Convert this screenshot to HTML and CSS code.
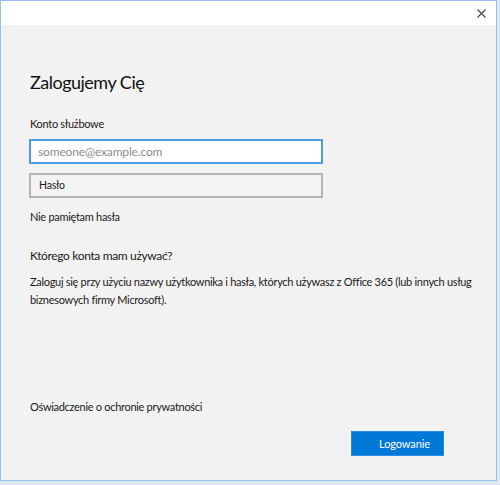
FILE: index.html
```html
<!DOCTYPE html>
<html lang="pl">
<head>
<meta charset="utf-8">
<title>Zaloguj</title>
<link rel="stylesheet" href="styles.css">
</head>
<body>
<div class="window">
  <div class="titlebar">
    <button class="close" aria-label="Zamknij">
      <svg width="9" height="9" viewBox="0 0 9 9"><path d="M0.5 0.5 L8.5 8.5 M8.5 0.5 L0.5 8.5" stroke="#444" stroke-width="1.1" fill="none"/></svg>
    </button>
  </div>
  <div class="content">
    <h1 class="heading">Zalogujemy Cię</h1>
    <div class="label">Konto służbowe</div>
    <input class="field field-email" type="text" placeholder="someone@example.com">
    <div class="field field-pass">Hasło</div>
    <a class="link forgot">Nie pamiętam hasła</a>
    <h2 class="subheading">Którego konta mam używać?</h2>
    <p class="desc">Zaloguj się przy użyciu nazwy użytkownika i hasła, których używasz z Office 365 (lub innych usług biznesowych firmy Microsoft).</p>
    <div class="spacer"></div>
    <a class="link privacy">Oświadczenie o ochronie prywatności</a>
    <div class="actions">
      <button class="signin">Logowanie</button>
    </div>
  </div>
</div>
</body>
</html>
```
FILE: styles.css
```css
html, body {
  margin: 0;
  padding: 0;
}
body {
  width: 500px;
  height: 485px;
  background: #dfe8f2;
  font-family: "Lato", "Liberation Sans", sans-serif;
  color: #1a1a1a;
  overflow: hidden;
}
.window {
  width: 495px;
  height: 479px;
  border: 1px solid #95c1ec;
  background: #f2f2f2;
  display: flex;
  flex-direction: column;
}
.titlebar {
  height: 24px;
  background: #ffffff;
  display: flex;
  justify-content: flex-end;
  align-items: center;
}
.close {
  width: 30px;
  height: 24px;
  border: 0;
  background: transparent;
  padding: 0;
  margin-right: 0;
  display: flex;
  align-items: center;
  justify-content: center;
}
.content {
  flex: 1;
  display: flex;
  flex-direction: column;
  padding-left: 28px;
  padding-right: 8px;
}
.heading {
  margin: 45px 0 0 1px;
  font-size: 18px;
  letter-spacing: -0.5px;
  line-height: 24px;
  font-weight: 400;
  color: #111;
}
.label {
  margin: 22px 0 0 1px;
  font-size: 11px;
  letter-spacing: -0.3px;
  line-height: 16px;
}
.field {
  box-sizing: border-box;
  width: 294px;
  height: 25px;
  border: 2px solid #b5b5b5;
  margin: 0;
  font-family: inherit;
}
.field-email {
  margin-top: 7px;
  border-color: #4f9ce6;
  background: #fff;
  padding: 0 7px;
  font-size: 12px;
  letter-spacing: -0.15px;
  color: #222;
  outline: none;
}
.field-email::placeholder {
  color: #8c8c8c;
}
.field-pass {
  margin-top: 9px;
  background: #f3f3f3;
  padding: 0 8px;
  font-size: 10.5px;
  letter-spacing: -0.2px;
  line-height: 21px;
}
.link {
  font-size: 11px;
  letter-spacing: -0.3px;
  line-height: 16px;
  color: #1a1a1a;
  margin-left: 1px;
}
.forgot {
  margin-top: 11px;
}
.subheading {
  margin: 22px 0 0 1px;
  font-size: 12px;
  letter-spacing: -0.35px;
  line-height: 18px;
  font-weight: 400;
}
.desc {
  margin: 8px 0 0 1px;
  font-size: 11px;
  letter-spacing: -0.3px;
  line-height: 18px;
}
.spacer {
  height: 90px;
}
.actions {
  margin-top: 16px;
  margin-right: 44px;
  display: flex;
  justify-content: flex-end;
}
.signin {
  width: 93px;
  height: 25px;
  background: #0078d7;
  border: 1px solid #2a8ce0;
  color: #fff;
  font-family: inherit;
  font-size: 11px;
  letter-spacing: -0.1px;
  padding: 0 0 0 14px;
}
```
